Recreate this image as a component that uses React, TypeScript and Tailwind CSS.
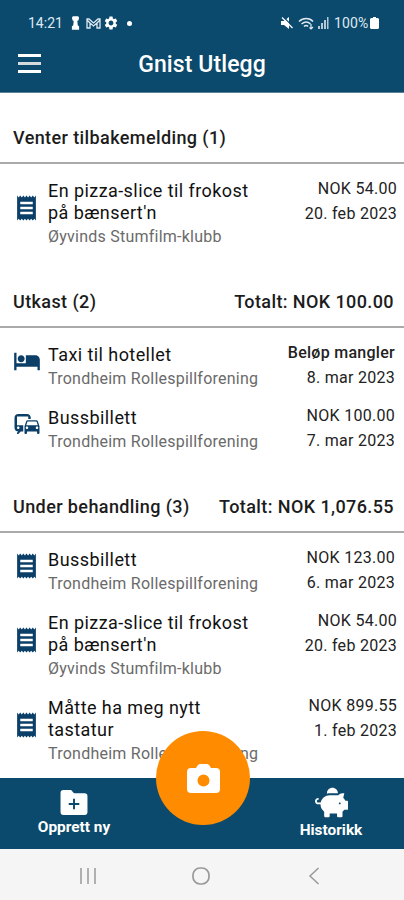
import React from 'react';
import { FaPiggyBank } from 'react-icons/fa';
import { MdReceipt, MdHotel, MdCommute, MdSettings } from 'react-icons/md';

type IconName = 'receipt' | 'hotel' | 'commute';

interface Expense {
  icon: IconName;
  title: string[];
  club: string;
  amount: string;
  date: string;
  missing?: boolean;
  wide?: boolean;
}

interface Section {
  title: string;
  total?: string;
  expenses: Expense[];
}

const sections: Section[] = [
  {
    title: 'Venter tilbakemelding (1)',
    expenses: [
      { icon: 'receipt', title: ['En pizza-slice til frokost', "på bænsert'n"], club: 'Øyvinds Stumfilm-klubb', amount: 'NOK 54.00', date: '20. feb 2023', wide: true },
    ],
  },
  {
    title: 'Utkast (2)',
    total: 'Totalt: NOK 100.00',
    expenses: [
      { icon: 'hotel', title: ['Taxi til hotellet'], club: 'Trondheim Rollespillforening', amount: 'Beløp mangler', date: '8. mar 2023', missing: true },
      { icon: 'commute', title: ['Bussbillett'], club: 'Trondheim Rollespillforening', amount: 'NOK 100.00', date: '7. mar 2023' },
    ],
  },
  {
    title: 'Under behandling (3)',
    total: 'Totalt: NOK 1,076.55',
    expenses: [
      { icon: 'receipt', title: ['Bussbillett'], club: 'Trondheim Rollespillforening', amount: 'NOK 123.00', date: '6. mar 2023' },
      { icon: 'receipt', title: ['En pizza-slice til frokost', "på bænsert'n"], club: 'Øyvinds Stumfilm-klubb', amount: 'NOK 54.00', date: '20. feb 2023', wide: true },
      { icon: 'receipt', title: ['Måtte ha meg nytt', 'tastatur'], club: 'Trondheim Rollespillforening', amount: 'NOK 899.55', date: '1. feb 2023', wide: true },
    ],
  },
];

const StatusBar: React.FC = () => (
  <div className="flex h-[46px] items-center justify-between pl-7 pr-[25px] text-sm text-[#dfe9f2]">
    <div className="flex items-center">
      <span className="w-[36px]">14:21</span>
      <svg className="ml-[7px] h-[14px] w-[9px]" viewBox="0 0 10 15" fill="#fff">
        <path d="M2 0h6l1 2-1 3H7l.5 5L9 11.500V15H1v-3.500L2.500 10 3 5H2L1 2z" />
      </svg>
      <svg className="ml-[6px] h-[11px] w-[15px]" viewBox="0 0 15 11" fill="none" stroke="currentColor" strokeWidth="1.3">
        <path d="M4 10H1V1h2l4.500 4L12 1h2v9h-3V5L7.500 8 4 5zM1 2l3 3M14 2l-3 3" />
      </svg>
      <MdSettings className="ml-[2px] h-[16px] w-[16px] text-white" />
      <span className="ml-[8px] h-[5px] w-[5px] rounded-full bg-white" />
    </div>
    <div className="flex items-center">
      <svg className="h-[12px] w-[12px]" viewBox="0 0 12 12" fill="#fff">
        <path d="M0 4h3l5-4v12L3 8H0z" />
        <path d="M2.500 0l9.500 9.500" stroke="#0b4a6c" strokeWidth="1.200" />
        <path d="M1 .5l10.500 10.500" stroke="#fff" strokeWidth="1.300" />
      </svg>
      <svg className="ml-[5px] h-[13px] w-[17px]" viewBox="0 0 17 13" fill="none" stroke="currentColor" strokeWidth="1.500">
        <path d="M1 4.500c4-4 10.500-4 14 0M3.500 7c3-2.500 6.500-2.500 9 0M6 9.500c1.500-1.500 3-1.500 4 0" />
        <path d="M13 7v5M11.500 10.500l1.500 1.500 2-2" strokeWidth="1.200" />
      </svg>
      <svg className="ml-[3px] h-[12px] w-[11px]" viewBox="0 0 11 12" fill="currentColor">
        <path d="M0 9h2v3H0zM3 6h2v6H3zM6 3h2v9H6zM9 0h1.500v12H9z" opacity=".8" />
      </svg>
      <span className="ml-[5px] w-[36px] whitespace-nowrap tracking-[0.1px]">100%</span>
      <svg className="h-[12px] w-[9px]" viewBox="0 0 9 12" fill="#fff">
        <path d="M3 0h3v1h2l1 1v9l-1 1H1l-1-1V2l1-1h2z" />
      </svg>
    </div>
  </div>
);

const Header: React.FC = () => (
  <header className="h-[93px] shrink-0 border-b border-[#5b7f97] bg-[#0b4a6c] text-white">
    <StatusBar />
    <div className="grid h-[36px] grid-cols-[1fr_auto_1fr] items-center">
      <button className="-mt-[2px] ml-[18px] flex w-[23px] flex-col gap-[5px]" aria-label="Meny">
        <span className="h-[3px] w-full bg-white" />
        <span className="h-[3px] w-full bg-[#d5dadd]" />
        <span className="h-[3px] w-full bg-white" />
      </button>
      <h1 className="mt-px text-[23px] font-medium leading-9 tracking-[0.1px]">Gnist Utlegg</h1>
      <span />
    </div>
  </header>
);

const ExpenseIcon: React.FC<{ name: IconName }> = ({ name }) => {
  if (name === 'hotel') return <MdHotel className="h-[28px] w-[28px]" />;
  if (name === 'commute') return <MdCommute className="h-[30px] w-[30px]" />;
  return <MdReceipt className="h-[30px] w-[25px]" preserveAspectRatio="none" />;
};

const ExpenseRow: React.FC<{ expense: Expense }> = ({ expense }) => (
  <li className={`flex ${expense.wide ? 'pr-[7px]' : 'pr-[9px]'}`}>
    <div className="flex w-[48px] shrink-0 items-center justify-center pb-[14px] pl-[5px] text-[#0b3f68]">
      <ExpenseIcon name={expense.icon} />
    </div>
    <div className="min-w-0 flex-1">
      {expense.title.map((line) => (
        <p key={line} className="whitespace-nowrap text-[18px] leading-[22px] tracking-[0.43px] text-[#111]">{line}</p>
      ))}
      <p className="whitespace-nowrap text-base leading-[25px] tracking-[0.24px] text-[#6a6a6a]">{expense.club}</p>
    </div>
    <div className="-mt-[4px] shrink-0 text-right text-base leading-[25px] tracking-[0.28px] text-[#222]">
      <p className={expense.missing ? 'font-medium' : ''}>{expense.amount}</p>
      <p>{expense.date}</p>
    </div>
  </li>
);

const ExpenseSection: React.FC<{ section: Section }> = ({ section }) => (
  <section>
    <div className="flex h-[71px] items-end justify-between border-b-2 border-[#aaa] pb-[12px] pl-[13px] pr-[10px] text-[18px] font-medium leading-6 tracking-[0.4px] text-[#1c1c1c]">
      <h2>{section.title}</h2>
      {section.total && <span>{section.total}</span>}
    </div>
    <ul className="flex flex-col gap-4 pb-2 pt-4">
      {section.expenses.map((expense, i) => (
        <ExpenseRow key={i} expense={expense} />
      ))}
    </ul>
  </section>
);

const TabBar: React.FC = () => (
  <nav className="relative flex h-[71px] shrink-0 justify-between bg-[#0b4a6c] text-[15.4px] font-bold leading-5 text-white">
    <button className="flex w-[148px] flex-col items-center pt-[12px]">
      <svg className="h-[25px] w-[28px]" viewBox="0 0 28 26">
        <path d="M3 0h8l3 3.500h11q3 0 3 3V23q0 3-3 3H3q-3 0-3-3V3q0-3 3-3z" fill="#fff" />
        <path d="M14 9v11M8.500 14.500h11" stroke="#0b4a6c" strokeWidth="2" />
      </svg>
      <span className="mt-[2px]">Opprett ny</span>
    </button>
    <button className="flex w-[146px] flex-col items-center pt-[8px]">
      <FaPiggyBank className="h-[33px] w-[33px]" />
      <span className="mt-px">Historikk</span>
    </button>
    <button className="absolute -top-[47px] left-[156px] flex h-[94px] w-[94px] items-center justify-center rounded-full bg-[#ff8c00]" aria-label="Ta bilde">
      <svg className="ml-[1px] h-[29px] w-[33px]" viewBox="0 0 33 29">
        <path fillRule="evenodd" d="M4 4h5l1.500-2.500Q11.500 0 13 0h7q1.500 0 2.500 1.500L24 4h5q4 0 4 4v17q0 4-4 4H4q-4 0-4-4V8q0-4 4-4zM16.500 10.500a6 6 0 1 0 0 12 6 6 0 0 0 0-12z" fill="#fff" />
      </svg>
    </button>
  </nav>
);

const SystemNav: React.FC = () => (
  <div className="flex h-[51px] shrink-0 items-center bg-[#f5f5f5] pl-[79px] pt-[2px] text-[#999]">
    <svg className="h-4 w-[18px]" viewBox="0 0 18 16" fill="none" stroke="currentColor" strokeWidth="1.500">
      <path d="M2 0v16M9 0v16M16 0v16" />
    </svg>
    <svg className="ml-[95px] h-[18px] w-[18px]" viewBox="0 0 18 18" fill="none" stroke="currentColor" strokeWidth="1.700">
      <rect x="1" y="1" width="16" height="16" rx="7" />
    </svg>
    <svg className="ml-[98px] h-[18px] w-[12px]" viewBox="0 0 12 18" fill="none" stroke="currentColor" strokeWidth="1.500">
      <path d="M10.500 1L2 9l8.500 8" />
    </svg>
  </div>
);

const App: React.FC = () => {
  return (
    <div className="flex h-[900px] w-[404px] flex-col overflow-hidden bg-white font-['Roboto',sans-serif]">
      <Header />
      <main className="min-h-0 flex-1 overflow-hidden">
        {sections.map((section) => (
          <ExpenseSection key={section.title} section={section} />
        ))}
      </main>
      <TabBar />
      <SystemNav />
    </div>
  );
};

export default App;
